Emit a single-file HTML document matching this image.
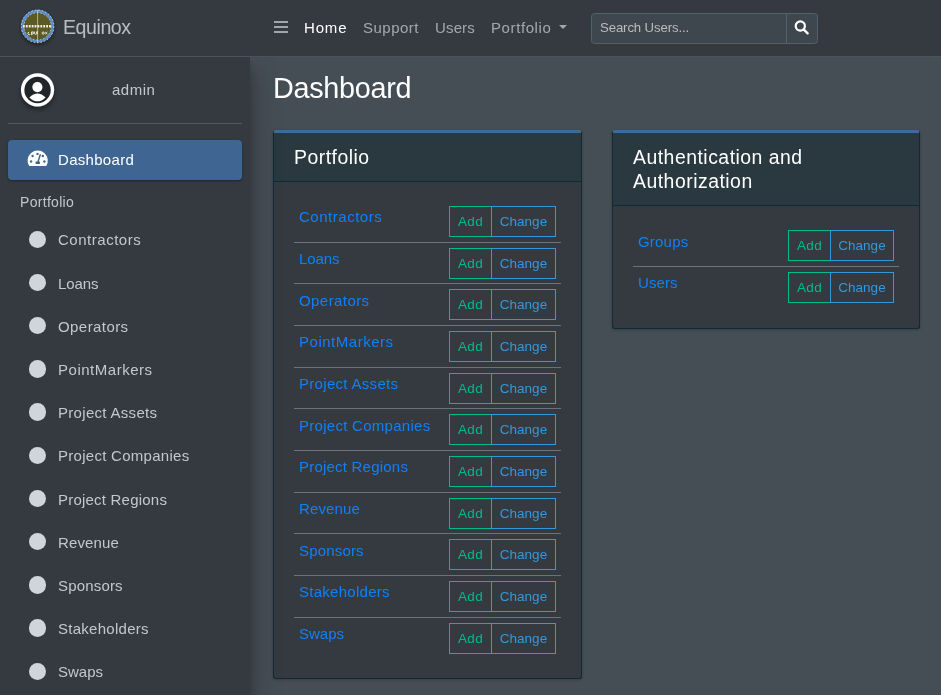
<!DOCTYPE html>
<html><head><meta charset="utf-8">
<style>
*{box-sizing:border-box;margin:0;padding:0}
html,body{width:941px;height:695px;overflow:hidden}
body{font-family:"Liberation Sans",sans-serif;background:#454d55;position:relative;color:#fff}
.abs{position:absolute}
/* navbar */
#nav{z-index:2;left:0;top:0;width:941px;height:57px;background:#343a40;border-bottom:1px solid #4b545c}
#sidebar{left:0;top:57px;width:250px;height:638px;z-index:1;background:#343a40;box-shadow:0 14px 28px rgba(0,0,0,.25),0 10px 10px rgba(0,0,0,.22)}
.t{position:absolute;white-space:nowrap;line-height:1}
.t,.lbl,.row a,.btn,.hd{will-change:transform}
.navlink{color:rgba(255,255,255,.55);font-size:15px}
.sb-item{position:absolute;left:0;width:250px;height:40px}
.sb-item .dot{position:absolute;left:28.7px;top:11.3px;width:17.4px;height:17.4px;border-radius:50%;background:#d0d4db}
.sb-item .lbl{position:absolute;left:58px;top:11px;font-size:15px;color:#c2c7d0;line-height:20px;white-space:nowrap}
.card{position:absolute;background:#343a40;border:1px solid #0e2b37;border-top:3px solid #3f6b9b;border-radius:3px;box-shadow:0 0 1px rgba(0,0,0,.125),0 1px 3px rgba(0,0,0,.2)}
.card .hd{background:#29393f;border-bottom:1px solid #0b2c39;padding:12px 20px;font-size:19.4px;letter-spacing:.5px;line-height:24px;color:#fff}
.row{position:absolute;height:41.667px;border-bottom:1px solid #6c7278}
.row.last{border-bottom:none}
.row a{position:absolute;left:5px;top:6.4px;font-size:15px;color:#1180f7;text-decoration:none;line-height:20px;white-space:nowrap}
.btns{position:absolute;top:5.0px;height:30.6px;display:flex}
.btn{height:30.6px;border:1px solid;font-size:13.5px;line-height:30px;text-align:center;background:transparent}
.btn.add{width:43px;letter-spacing:.4px;border-color:#00bc8c;color:#00bc8c}
.btn.chg{width:65px;border-color:#3498db;color:#3498db;border-left-width:1px;margin-left:-1px}
</style></head><body>

<div id="nav" class="abs">
  <!-- logo -->
  <svg class="abs" style="left:19px;top:8px" width="38" height="40" viewBox="0 0 38 40">
    <defs><filter id="sh" x="-30%" y="-30%" width="160%" height="160%"><feDropShadow dx="0" dy="2" stdDeviation="2" flood-opacity=".5"/></filter></defs>
    <circle cx="18.6" cy="18.2" r="16.4" fill="#5a8bcb" filter="url(#sh)"/>
    <circle cx="18.6" cy="18.4" r="16.3" fill="none" stroke="#e8e8e0" stroke-width=".8" stroke-dasharray="1.5 2"/>
    <circle cx="18.6" cy="18.4" r="13.6" fill="#5c5a23"/>
    <circle cx="18.6" cy="18.4" r="13.6" fill="none" stroke="#e8e8e0" stroke-width=".6" stroke-dasharray="1.5 2"/>
    <line x1="18.6" y1="2" x2="18.6" y2="35" stroke="#d8d6b8" stroke-width=".7"/>
    <line x1="4" y1="18.3" x2="33" y2="18.3" stroke="#f0f0e8" stroke-width="2.4" stroke-dasharray="1.8 1.1"/>
    <g fill="none" stroke="#eeeee4" stroke-width=".9"><path d="M10.2 24.2 a1.3 1.3 0 1 0 1 2.2"/><path d="M12.6 23.6 v3.6"/><circle cx="13.8" cy="24.9" r="1.1"/><path d="M15.6 23.6 v1.8 a1 1 0 0 0 2 0 v-1.8"/><path d="M18.3 23.2 v3"/><circle cx="24.2" cy="25.1" r="1.1"/><path d="M26.2 24 l2.2 2.2 M28.4 24 l-2.2 2.2"/></g>
  </svg>
  <div class="t" style="left:63px;top:16px;font-size:19.6px;letter-spacing:-.45px;color:rgba(255,255,255,.66);line-height:22px">Equinox</div>
  <!-- hamburger -->
  <div class="abs" style="left:274px;top:20.6px;width:14px;height:2.2px;background:rgba(255,255,255,.55)"></div>
  <div class="abs" style="left:274px;top:25.9px;width:14px;height:2.2px;background:rgba(255,255,255,.55)"></div>
  <div class="abs" style="left:274px;top:31.1px;width:14px;height:2.2px;background:rgba(255,255,255,.55)"></div>
  <div class="t navlink" style="left:303.6px;top:19px;color:#fff;line-height:18px;letter-spacing:.85px">Home</div>
  <div class="t navlink" style="left:362.5px;top:19px;line-height:18px;letter-spacing:.48px">Support</div>
  <div class="t navlink" style="left:434.5px;top:19px;line-height:18px;letter-spacing:.15px">Users</div>
  <div class="t navlink" style="left:491px;top:19px;line-height:18px;letter-spacing:.6px">Portfolio</div>
  <div class="abs" style="left:559.2px;top:25px;width:0;height:0;border-left:4px solid transparent;border-right:4px solid transparent;border-top:4.5px solid rgba(255,255,255,.55)"></div>
  <!-- search -->
  <div class="abs" style="left:591px;top:13px;width:227px;height:30.7px;background:#3f474e;border:1px solid #56606a;border-radius:3.5px"></div>
  <div class="abs" style="left:786px;top:13px;width:1px;height:30.7px;background:#56606a"></div>
  <div class="t" style="left:600.3px;top:20px;font-size:13.2px;letter-spacing:-.12px;color:#b9bcc0;line-height:16px">Search Users...</div>
  <svg class="abs" style="left:793px;top:19px" width="17" height="16" viewBox="0 0 17 16">
    <circle cx="7.3" cy="7" r="4.6" fill="none" stroke="#fff" stroke-width="2.2"/>
    <line x1="10.6" y1="10.4" x2="14.6" y2="14.3" stroke="#fff" stroke-width="2.4" stroke-linecap="round"/>
  </svg>
</div>

<div id="sidebar" class="abs">
  <div class="abs" style="left:0;top:0;width:250px;height:638px">
  <svg class="abs" style="left:17px;top:13px" width="42" height="44" viewBox="17 70 42 44">
    <defs><filter id="sh2" x="-30%" y="-30%" width="160%" height="160%"><feDropShadow dx="0" dy="3" stdDeviation="2.5" flood-opacity=".45"/></filter></defs>
    <circle cx="37.55" cy="89.8" r="16.6" fill="#fff" filter="url(#sh2)"/>
    <circle cx="37.55" cy="90" r="13.2" fill="#212529"/>
    <circle cx="37.4" cy="87.1" r="5.1" fill="#fff"/>
    <path d="M29.3 97.4 Q37.5 89.6 45.6 97.4 Q37.5 105.2 29.3 97.4 Z" fill="#fff"/>
  </svg>
  <div class="t" style="left:111.5px;top:24px;letter-spacing:.5px;font-size:15px;color:#c2c7d0;line-height:18px">admin</div>
  <div class="abs" style="left:8px;top:66px;width:234px;height:1px;background:#4f5962"></div>
  <div class="abs" style="left:8px;top:83px;width:234px;height:40px;background:#3f6692;border-radius:4px;box-shadow:0 1px 3px rgba(0,0,0,.12),0 1px 2px rgba(0,0,0,.24)"></div>
  <svg class="abs" style="left:24px;top:89px" width="28" height="24" viewBox="24 146 28 24">
    <path d="M29.17 166 A10.1 10.1 0 1 1 46.23 166 Z" fill="#fff"/>
    <g fill="#3f6692"><circle cx="31.1" cy="161.5" r="1.2"/><circle cx="32.6" cy="156" r="1.2"/><circle cx="37.5" cy="153.9" r="1.2"/><circle cx="42.8" cy="156" r="1.2"/><circle cx="44.4" cy="161.5" r="1.2"/>
    <path d="M39.7 154.1 L41.1 154.5 L38.9 161.6 L39.9 161.6 L39.9 163.9 L35.6 163.9 L35.6 161.6 L37.4 161.6 Z"/></g>
  </svg>
  <div class="t" style="left:57.5px;top:93px;letter-spacing:.3px;font-size:15px;color:#fff;line-height:20px">Dashboard</div>
  <div class="t" style="left:19.5px;top:137px;letter-spacing:.3px;font-size:14px;color:#c2c7d0;line-height:16px">Portfolio</div>
  <div class="sb-item" style="top:162.40px"><div class="dot"></div><div class="lbl" style="left:57.6px;letter-spacing:0.52px">Contractors</div></div>
  <div class="sb-item" style="top:205.60px"><div class="dot"></div><div class="lbl" style="left:57.6px;letter-spacing:-0.075px">Loans</div></div>
  <div class="sb-item" style="top:248.80px"><div class="dot"></div><div class="lbl" style="left:57.6px;letter-spacing:0.425px">Operators</div></div>
  <div class="sb-item" style="top:292.00px"><div class="dot"></div><div class="lbl" style="left:57.6px;letter-spacing:0.518px">PointMarkers</div></div>
  <div class="sb-item" style="top:335.20px"><div class="dot"></div><div class="lbl" style="left:57.6px;letter-spacing:0.308px">Project Assets</div></div>
  <div class="sb-item" style="top:378.40px"><div class="dot"></div><div class="lbl" style="left:57.6px;letter-spacing:0.281px">Project Companies</div></div>
  <div class="sb-item" style="top:421.60px"><div class="dot"></div><div class="lbl" style="left:57.6px;letter-spacing:0.214px">Project Regions</div></div>
  <div class="sb-item" style="top:464.80px"><div class="dot"></div><div class="lbl" style="left:57.6px;letter-spacing:0.117px">Revenue</div></div>
  <div class="sb-item" style="top:508.00px"><div class="dot"></div><div class="lbl" style="left:57.6px;letter-spacing:0.171px">Sponsors</div></div>
  <div class="sb-item" style="top:551.20px"><div class="dot"></div><div class="lbl" style="left:57.6px;letter-spacing:0.273px">Stakeholders</div></div>
  <div class="sb-item" style="top:594.40px"><div class="dot"></div><div class="lbl" style="left:57.6px;letter-spacing:0.0px">Swaps</div></div>
  </div>
</div>

<div class="t" style="left:272.6px;top:73px;letter-spacing:-.3px;font-size:28.8px;color:#fff;line-height:30px">Dashboard</div>
<div class="card" style="left:273px;top:130px;width:308.5px;height:548.5px">
  <div class="hd">Portfolio</div>
  <div class="row" style="left:20px;width:267px;top:68.100px"><a style="left:4.6px;letter-spacing:0.52px">Contractors</a><div class="btns" style="left:155px"><div class="btn add">Add</div><div class="btn chg">Change</div></div></div>
  <div class="row" style="left:20px;width:267px;top:109.767px"><a style="left:4.6px;letter-spacing:-0.075px">Loans</a><div class="btns" style="left:155px"><div class="btn add">Add</div><div class="btn chg">Change</div></div></div>
  <div class="row" style="left:20px;width:267px;top:151.434px"><a style="left:4.6px;letter-spacing:0.425px">Operators</a><div class="btns" style="left:155px"><div class="btn add">Add</div><div class="btn chg">Change</div></div></div>
  <div class="row" style="left:20px;width:267px;top:193.101px"><a style="left:4.6px;letter-spacing:0.518px">PointMarkers</a><div class="btns" style="left:155px"><div class="btn add">Add</div><div class="btn chg">Change</div></div></div>
  <div class="row" style="left:20px;width:267px;top:234.768px"><a style="left:4.6px;letter-spacing:0.308px">Project Assets</a><div class="btns" style="left:155px"><div class="btn add">Add</div><div class="btn chg">Change</div></div></div>
  <div class="row" style="left:20px;width:267px;top:276.435px"><a style="left:4.6px;letter-spacing:0.281px">Project Companies</a><div class="btns" style="left:155px"><div class="btn add">Add</div><div class="btn chg">Change</div></div></div>
  <div class="row" style="left:20px;width:267px;top:318.102px"><a style="left:4.6px;letter-spacing:0.214px">Project Regions</a><div class="btns" style="left:155px"><div class="btn add">Add</div><div class="btn chg">Change</div></div></div>
  <div class="row" style="left:20px;width:267px;top:359.769px"><a style="left:4.6px;letter-spacing:0.117px">Revenue</a><div class="btns" style="left:155px"><div class="btn add">Add</div><div class="btn chg">Change</div></div></div>
  <div class="row" style="left:20px;width:267px;top:401.436px"><a style="left:4.6px;letter-spacing:0.171px">Sponsors</a><div class="btns" style="left:155px"><div class="btn add">Add</div><div class="btn chg">Change</div></div></div>
  <div class="row" style="left:20px;width:267px;top:443.103px"><a style="left:4.6px;letter-spacing:0.273px">Stakeholders</a><div class="btns" style="left:155px"><div class="btn add">Add</div><div class="btn chg">Change</div></div></div>
  <div class="row last" style="left:20px;width:267px;top:484.770px"><a style="left:4.6px;letter-spacing:0.0px">Swaps</a><div class="btns" style="left:155px"><div class="btn add">Add</div><div class="btn chg">Change</div></div></div>
</div>
<div class="card" style="left:612px;top:130px;width:307.5px;height:198.5px">
  <div class="hd">Authentication and<br>Authorization</div>
  <div class="row" style="left:20px;width:266px;top:92.400px"><a style="left:4.6px;letter-spacing:0.2px">Groups</a><div class="btns" style="left:155px"><div class="btn add">Add</div><div class="btn chg" style="width:64px">Change</div></div></div>
  <div class="row last" style="left:20px;width:266px;top:134.067px"><a style="left:4.6px;letter-spacing:0.1px">Users</a><div class="btns" style="left:155px"><div class="btn add">Add</div><div class="btn chg" style="width:64px">Change</div></div></div>
</div>
</body></html>
